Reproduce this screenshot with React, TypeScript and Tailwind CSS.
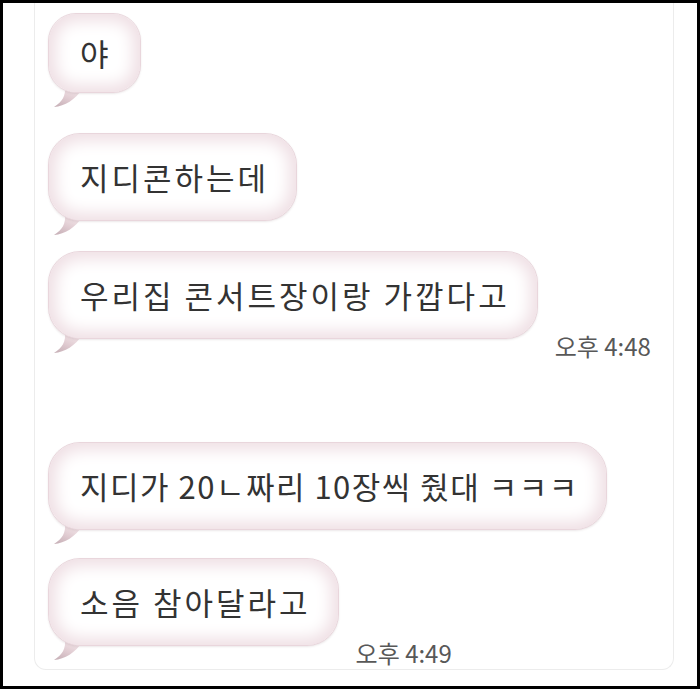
import React from "react";

interface BubbleProps {
  text: string;
  time?: string;
  className?: string;
  square?: boolean;
  tight?: boolean;
}

function Tail() {
  return (
    <svg
      className="absolute left-[3px] bottom-0"
      width="36"
      height="24"
      viewBox="0 0 36 24"
    >
      <defs>
        <linearGradient id="tailFill" x1="0" y1="1" x2="0.6" y2="0">
          <stop offset="0" stopColor="#c4adb4" />
          <stop offset="0.5" stopColor="#e0cbd1" />
          <stop offset="1" stopColor="#f4e8eb" />
        </linearGradient>
      </defs>
      <path
        d="M14 2 C15 12 11 18 3 23 C14 22 24 16 32 4 Z"
        fill="url(#tailFill)"
      />
    </svg>
  );
}

function Bubble({
  text,
  time,
  className = "",
  square = false,
  tight = false,
}: BubbleProps) {
  return (
    <div className={`flex items-end ${className}`}>
      <div className="relative pb-[15px]">
        <Tail />
        <div
          className={`relative flex items-center bg-white border border-[#e9d6dc] shadow-[inset_0_0_16px_7px_#efdfe4,0_1px_2px_rgba(120,90,100,0.14)] ${
            square
              ? "h-[80px] rounded-[28px] pl-[31px] pr-[28px]"
              : "h-[88px] rounded-[32px] pl-[31px] pr-[27px]"
          }`}
        >
          <span
            className={`text-[31px] leading-9 text-[#333333] whitespace-pre ${
              tight ? "tracking-[1.5px]" : "tracking-[3px]"
            }`}
          >
            {text}
          </span>
        </div>
      </div>
      {time && (
        <span className="ml-[17px] mb-[-6px] text-[24px] leading-7 text-[#585858] whitespace-pre">
          {time}
        </span>
      )}
    </div>
  );
}

export default function App() {
  return (
    <div
      className="w-[700px] h-[689px] bg-black p-[3px]"
      style={{ fontFamily: '"Noto Sans CJK KR", "Noto Sans", sans-serif' }}
    >
      <div className="w-full h-full bg-white pl-[31px] pr-[23px] pb-[16px]">
        <div className="h-full border border-t-0 border-[#ececec] rounded-b-xl pl-[13px] pt-[10px]">
          <Bubble text="야" square />
          <Bubble text="지디콘하는데" className="mt-[25px]" />
          <Bubble
            text="우리집 콘서트장이랑 가깝다고"
            time="오후 4:48"
            className="mt-[15px]"
          />
          <Bubble
            text="지디가 20ㄴ짜리 10장씩 줬대 ㅋㅋㅋ"
            className="mt-[88px]"
            tight
          />
          <Bubble
            text="소음 참아달라고"
            time="오후 4:49"
            className="mt-[13px]"
          />
        </div>
      </div>
    </div>
  );
}
